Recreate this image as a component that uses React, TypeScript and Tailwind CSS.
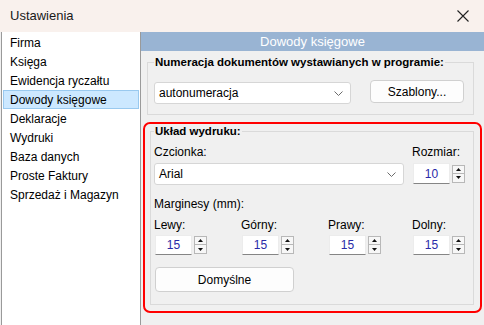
import React from "react";

const items = [
  "Firma",
  "Księga",
  "Ewidencja ryczałtu",
  "Dowody księgowe",
  "Deklaracje",
  "Wydruki",
  "Baza danych",
  "Proste Faktury",
  "Sprzedaż i Magazyn",
];

function Chevron() {
  return (
    <svg width="9" height="5" viewBox="0 0 9 5" className="mr-[7px]">
      <path d="M0.5 0.5 L4.5 4.5 L8.5 0.5" fill="none" stroke="#6b6b6b" strokeWidth="1" />
    </svg>
  );
}

function Select({ value, w, h }: { value: string; w: string; h: string }) {
  return (
    <div className={`${w} ${h} bg-white border border-[#d6d6d6] rounded-[3px] flex items-center justify-between pl-[4px]`}>
      <span className="text-[12px]">{value}</span>
      <Chevron />
    </div>
  );
}

function Spin({ v, h }: { v: string; h: string }) {
  return (
    <div className="flex items-center gap-[2px]">
      <div className={`w-[37px] ${h} bg-white border border-[#ececec] border-b-[#858585] flex items-center justify-center text-[12px] text-[#2a2aa8]`}>
        {v}
      </div>
      <div className="flex flex-col">
        <div className="w-[13px] h-[9px] border border-[#b8b8b8] bg-[#f7f7f7] flex items-center justify-center">
          <svg width="5" height="3" viewBox="0 0 5 3"><path d="M0 3 L2.5 0 L5 3 Z" fill="#111" /></svg>
        </div>
        <div className="w-[13px] h-[9px] border border-t-0 border-[#b8b8b8] bg-[#f7f7f7] flex items-center justify-center">
          <svg width="5" height="3" viewBox="0 0 5 3"><path d="M0 0 L2.5 3 L5 0 Z" fill="#111" /></svg>
        </div>
      </div>
    </div>
  );
}

export default function App() {
  return (
    <div className="w-[484px] h-[325px] flex flex-col bg-[#f0f0f0] text-black font-['Liberation_Sans',Arial,sans-serif] overflow-hidden">
      {/* title bar */}
      <div className="h-[32px] shrink-0 bg-[#f9f1ed] flex items-center justify-between pl-[10px] pr-[15px]">
        <span className="text-[13px] text-[#1a1a1a]">Ustawienia</span>
        <svg width="12" height="12" viewBox="0 0 12 12">
          <path d="M0.5 0.5 L11.5 11.5 M11.5 0.5 L0.5 11.5" stroke="#222" strokeWidth="1.1" />
        </svg>
      </div>

      <div className="flex flex-1 min-h-0">
        {/* left list */}
        <div className="w-[140px] shrink-0 bg-white border-l border-r border-[#9a9a9a] pt-px ml-px">
          {items.map((it) => (
            <div
              key={it}
              className={`mx-[1px] h-[19px] px-[6px] flex items-center text-[12px] border ${
                it === "Dowody księgowe" ? "bg-[#cce8ff] border-[#99c9ef]" : "border-transparent"
              }`}
            >
              {it}
            </div>
          ))}
        </div>

        {/* right panel */}
        <div className="flex-1 flex flex-col">
          <div className="h-[19px] shrink-0 bg-[#99b4d3] text-white text-[13px] flex items-center justify-center">
            Dowody księgowe
          </div>

          <fieldset className="mt-[4px] ml-[6px] mr-[10px] border border-[#dadada] px-[6px] pb-[10px]">
            <legend className="px-px text-[11.5px] leading-[14px] font-bold">
              Numeracja dokumentów wystawianych w programie:
            </legend>
            <div className="mt-[11px] flex items-start">
              <div className="mt-[2px]">
                <Select value="autonumeracja" w="w-[197px]" h="h-[22px]" />
              </div>
              <div className="ml-[19px] w-[94px] h-[23px] bg-[#fdfdfd] border border-[#d0d0d0] rounded-[4px] flex items-center justify-center text-[12px]">
                Szablony...
              </div>
            </div>
          </fieldset>

          <div className="mt-[7px] mx-[2px] border-2 border-[#ff0000] rounded-[7px] pb-[6px]">
            <fieldset className="ml-[5px] mr-[6px] border border-[#dadada] px-[3px] pb-[12px]">
              <legend className="px-px text-[11.5px] leading-[14px] font-bold">Układ wydruku:</legend>

              <div className="mt-[7px] flex">
                <div className="w-[250px] flex flex-col gap-[4px]">
                  <span className="text-[12px] leading-[14px]">Czcionka:</span>
                  <Select value="Arial" w="w-[250px]" h="h-[22px]" />
                </div>
                <div className="ml-[8px] flex flex-col gap-[4px]">
                  <span className="text-[12px] leading-[14px]">Rozmiar:</span>
                  <div className="ml-px">
                    <Spin v="10" h="h-[21px]" />
                  </div>
                </div>
              </div>

              <div className="mt-[12px] text-[12px] leading-[14px]">Marginesy (mm):</div>

              <div className="mt-[7px] flex">
                {[
                  ["Lewy:", "w-[87px]"],
                  ["Górny:", "w-[87px]"],
                  ["Prawy:", "w-[84px]"],
                  ["Dolny:", "flex-1"],
                ].map(([l, w]) => (
                  <div key={l} className={`${w} flex flex-col gap-[3px]`}>
                    <span className="text-[12px] leading-[14px]">{l}</span>
                    <div className="ml-px">
                      <Spin v="15" h="h-[20px]" />
                    </div>
                  </div>
                ))}
              </div>

              <div className="mt-[12px] ml-px w-[139px] h-[25px] bg-[#fdfdfd] border border-[#d0d0d0] rounded-[4px] flex items-center justify-center text-[12px]">
                Domyślne
              </div>
            </fieldset>
          </div>
        </div>
      </div>
    </div>
  );
}
